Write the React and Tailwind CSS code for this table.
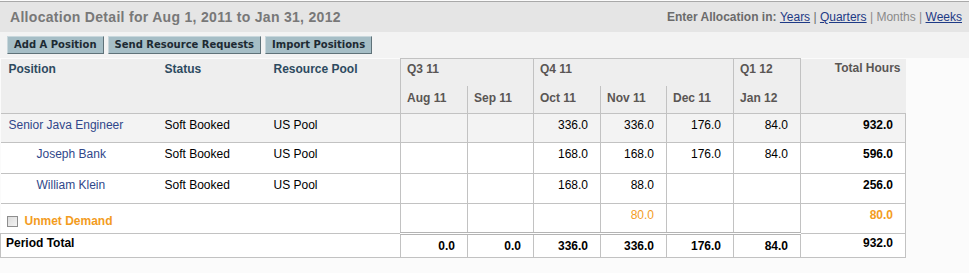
import React from 'react'

const months = ['Aug 11', 'Sep 11', 'Oct 11', 'Nov 11', 'Dec 11', 'Jan 12']

const rows = [
  { name: 'Senior Java Engineer', indent: false, vals: ['', '', '336.0', '336.0', '176.0', '84.0'], total: '932.0', h: 'h-[29px]', bg: 'bg-[#f3f3f3]' },
  { name: 'Joseph Bank', indent: true, vals: ['', '', '168.0', '168.0', '176.0', '84.0'], total: '596.0', h: 'h-[31px]', bg: 'bg-white' },
  { name: 'William Klein', indent: true, vals: ['', '', '168.0', '88.0', '', ''], total: '256.0', h: 'h-[30px]', bg: 'bg-white' },
]

// light grey grid lines
const cellB = 'border border-[#c2c2c2]'

function ToolButton({ children }) {
  return (
    <button className="h-[18px] px-[6px] bg-[#a6bec6] border-t border-l border-[#c9d7dc] border-r border-b border-r-[#5f7279] border-b-[#5f7279] text-[10px] font-bold text-[#1d2a33] leading-none [font-family:'DejaVu_Sans',sans-serif]">
      {children}
    </button>
  )
}

export default function App() {
  return (
    <div className="w-[969px] h-[273px] bg-[#fbfbfb] text-[12px] leading-[14px] text-black [font-family:'Liberation_Sans',Arial,sans-serif] overflow-hidden">
      {/* Title bar */}
      <div className="mt-px h-[31px] border-t border-[#a9a9a9] bg-[#e5e5e5] flex items-center justify-between pl-[10px] pr-[7px]">
        <div className="text-[14px] font-bold text-[#787878] tracking-[0.3px]">Allocation Detail for Aug 1, 2011 to Jan 31, 2012</div>
        <div className="text-[12px] text-[#6b6b6b]">
          <span className="font-bold">Enter Allocation in: </span>
          <a className="underline text-[#1e3a86]">Years</a>
          <span> | </span>
          <a className="underline text-[#1e3a86]">Quarters</a>
          <span className="text-[#8a8a8a]"> | Months | </span>
          <a className="underline text-[#1e3a86]">Weeks</a>
        </div>
      </div>

      {/* Toolbar */}
      <div className="flex gap-[4px] pl-[7px] pt-[4px] h-[26px] bg-[#f3f3f3]">
        <ToolButton>Add A Position</ToolButton>
        <ToolButton>Send Resource Requests</ToolButton>
        <ToolButton>Import Positions</ToolButton>
      </div>

      {/* Grid */}
      <table className="table-fixed border-collapse w-[905px]">
        <colgroup>
          <col className="w-[156px]" />
          <col className="w-[109px]" />
          <col className="w-[135px]" />
          <col className="w-[67px]" />
          <col className="w-[66px]" />
          <col className="w-[67px]" />
          <col className="w-[66px]" />
          <col className="w-[67px]" />
          <col className="w-[67px]" />
          <col className="w-[105px]" />
        </colgroup>
        <thead className="bg-[#eeeeee]">
          <tr className="h-[27px]">
            <th rowSpan={2} className="align-top text-left font-bold text-[#2d4a60] pl-[8px] pt-[3px]">Position</th>
            <th rowSpan={2} className="align-top text-left font-bold text-[#2d4a60] pl-[8px] pt-[3px]">Status</th>
            <th rowSpan={2} className="align-top text-left font-bold text-[#2d4a60] pl-[8px] pt-[3px]">Resource Pool</th>
            <th colSpan={2} className={`align-top text-left font-bold text-[#5a5654] pl-[6px] pt-[3px] ${cellB} border-b-0`}>Q3 11</th>
            <th colSpan={3} className={`align-top text-left font-bold text-[#5a5654] pl-[6px] pt-[3px] ${cellB} border-b-0`}>Q4 11</th>
            <th className={`align-top text-left font-bold text-[#5a5654] pl-[6px] pt-[3px] ${cellB} border-b-0`}>Q1 12</th>
            <th rowSpan={2} className="align-top text-right font-bold text-[#5a5654] pr-[5px] pt-[2px]">Total Hours</th>
          </tr>
          <tr className="h-[28px]">
            {months.map(m => (
              <th key={m} className="align-top text-left font-bold text-[#5a5654] pl-[6px] pt-[5px] border-l border-r border-[#c2c2c2]">{m}</th>
            ))}
          </tr>
        </thead>
        <tbody>
          {rows.map(r => (
            <tr key={r.name} className={`${r.h} ${r.bg} border-t border-b border-[#c2c2c2]`}>
              <td className={`align-top pt-[4px] text-[#30478a] ${r.indent ? 'pl-[36px]' : 'pl-[8px]'}`}>{r.name}</td>
              <td className="align-top pt-[4px] pl-[8px]">Soft Booked</td>
              <td className="align-top pt-[4px] pl-[8px]">US Pool</td>
              {r.vals.map((v, i) => (
                <td key={i} className={`align-top pt-[4px] text-right pr-[12px] ${cellB}`}>{v}</td>
              ))}
              <td className={`align-top pt-[4px] text-right pr-[12px] font-bold ${cellB}`}>{r.total}</td>
            </tr>
          ))}
          <tr className="h-[30px] bg-white">
            <td colSpan={3} className="align-top pt-[10px] pl-[6px]">
              <div className="flex items-center gap-[7px]">
                <span className="w-[11px] h-[11px] border border-[#8e8e8e] bg-gradient-to-br from-[#dcdcdc] to-[#f4f4f4]" />
                <span className="font-bold text-[#f39c1e]">Unmet Demand</span>
              </div>
            </td>
            {['', '', '', '80.0', '', ''].map((v, i) => (
              <td key={i} className={`align-top pt-[4px] text-right pr-[12px] text-[#f39c1e] ${cellB}`}>{v}</td>
            ))}
            <td className={`align-top pt-[4px] text-right pr-[12px] font-bold text-[#f39c1e] ${cellB}`}>80.0</td>
          </tr>
          <tr className="h-[24px] bg-white">
            <td colSpan={3} className={`align-top pt-[2px] pl-[5px] font-bold ${cellB}`}>Period Total</td>
            {['0.0', '0.0', '336.0', '336.0', '176.0', '84.0'].map((v, i) => (
              <td key={i} className={`align-top pt-[4px] text-right pr-[12px] font-bold ${cellB} border-t-[3px] border-t-[#b4b4b4] border-double`}>{v}</td>
            ))}
            <td className={`align-top pt-[2px] text-right pr-[12px] font-bold ${cellB}`}>932.0</td>
          </tr>
        </tbody>
      </table>
    </div>
  )
}
